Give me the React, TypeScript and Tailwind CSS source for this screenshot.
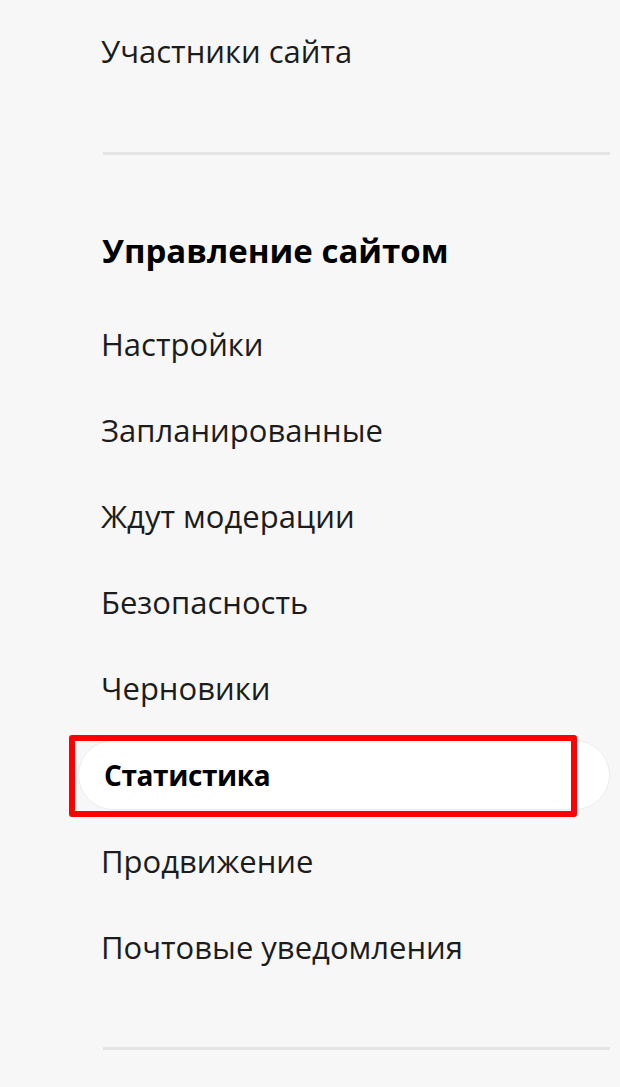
const items = [
  "Настройки",
  "Запланированные",
  "Ждут модерации",
  "Безопасность",
  "Черновики",
  "Статистика",
  "Продвижение",
  "Почтовые уведомления",
];

const ACTIVE = "Статистика";

export default function App() {
  return (
    <div
      className="h-[1087px] overflow-hidden bg-[#f7f7f7] pl-[78px] pr-[10px] pt-[8px] text-[#1c1c1c]"
      style={{ fontFamily: '"Open Sans", "Noto Sans", sans-serif' }}
    >
      <div className="flex h-[86px] items-center pl-[23px] text-[31px]">Участники сайта</div>

      <div className="ml-[25px] mt-[58px] h-[3px] bg-[#e4e4e4]" />

      <div className="mt-[53px] flex h-[86px] items-center pl-[24px] text-[33px] font-bold text-black">
        Управление сайтом
      </div>

      <div className="mt-[7px] flex flex-col">
        {items.map((label) =>
          label === ACTIVE ? (
            <div key={label} className="relative flex h-[87px] items-center">
              <div className="flex h-[70px] w-full items-center rounded-full border border-[#ececec] bg-white pl-[25px] text-[28px] font-bold tracking-[-0.4px] text-black">
                {label}
              </div>
              <div className="pointer-events-none absolute left-[-9px] top-[4px] h-[82px] w-[508px] rounded-[3px] border-[6px] border-[#ff0000]" />
            </div>
          ) : (
            <div key={label} className="flex h-[86px] items-center pl-[23px] text-[31px]">
              {label}
            </div>
          )
        )}
      </div>

      <div className="ml-[25px] mt-[57px] h-[3px] bg-[#e4e4e4]" />
    </div>
  );
}
